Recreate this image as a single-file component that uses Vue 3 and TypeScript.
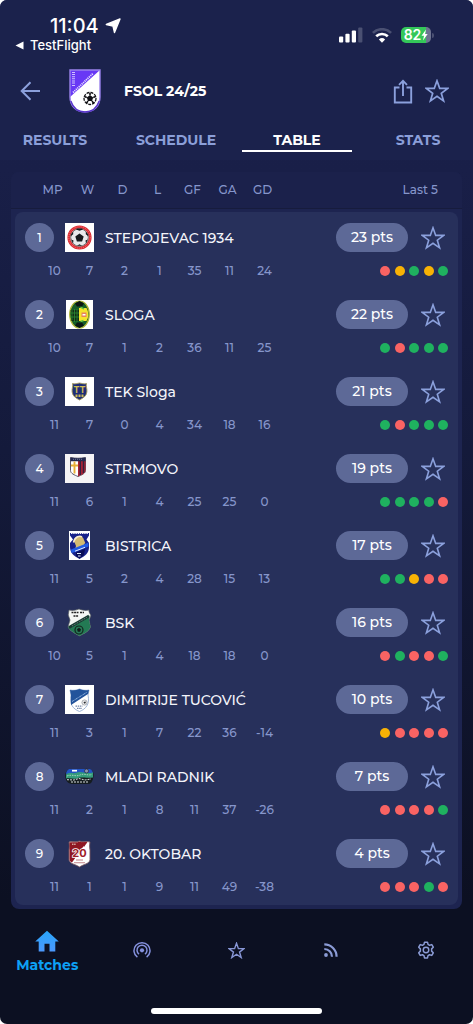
<script setup lang="ts">
import { ref } from 'vue'

type Result = 'w' | 'd' | 'l'

interface Team {
  name: string
  crest: string
  stats: number[]
  points: number
  form: Result[]
}

const form = (s: string): Result[] => s.split('') as Result[]

const teams: Team[] = [
  { name: 'STEPOJEVAC 1934', crest: 'ball', stats: [10, 7, 2, 1, 35, 11, 24], points: 23, form: form('ldwdw') },
  { name: 'SLOGA', crest: 'sloga', stats: [10, 7, 1, 2, 36, 11, 25], points: 22, form: form('wlwww') },
  { name: 'TEK Sloga', crest: 'tek', stats: [11, 7, 0, 4, 34, 18, 16], points: 21, form: form('wlwww') },
  { name: 'STRMOVO', crest: 'strmovo', stats: [11, 6, 1, 4, 25, 25, 0], points: 19, form: form('wwwwl') },
  { name: 'BISTRICA', crest: 'bistrica', stats: [11, 5, 2, 4, 28, 15, 13], points: 17, form: form('wwdll') },
  { name: 'BSK', crest: 'bsk', stats: [10, 5, 1, 4, 18, 18, 0], points: 16, form: form('lwllw') },
  { name: 'DIMITRIJE TUCOVIĆ', crest: 'tucovic', stats: [11, 3, 1, 7, 22, 36, -14], points: 10, form: form('dllll') },
  { name: 'MLADI RADNIK', crest: 'mladi', stats: [11, 2, 1, 8, 11, 37, -26], points: 7, form: form('llllw') },
  { name: '20. OKTOBAR', crest: 'oktobar', stats: [11, 1, 1, 9, 11, 49, -38], points: 4, form: form('lllwl') },
]

const columns = ['MP', 'W', 'D', 'L', 'GF', 'GA', 'GD']
const tabs = ['RESULTS', 'SCHEDULE', 'TABLE', 'STATS']
const activeTab = ref('TABLE')
const favourites = ref<string[]>([])
const starPath = 'M12 1.8 14.7 9.4H22.7L16.3 14.2 18.6 21.9 12 17.3 5.4 21.9 7.7 14.2 1.3 9.4H9.3Z'
const formLabel: Record<Result, string> = { w: 'win', d: 'draw', l: 'loss' }

function toggle(name: string) {
  favourites.value = favourites.value.includes(name)
    ? favourites.value.filter((n) => n !== name)
    : [...favourites.value, name]
}
</script>

<template>
  <div class="frame">
    <div class="screen">
      <header class="top">
        <div class="status">
          <div class="clock">
            <div class="time">
              <span>11:04</span>
              <svg width="16" height="16" viewBox="0 0 16 16" aria-hidden="true"><path d="M15 1 9.500 14.500 8 8 1.300 6.500Z" fill="#fff" stroke="#fff" stroke-width="1.400" stroke-linejoin="round" /></svg>
            </div>
            <a class="back-app" href="#testflight">
              <svg width="9" height="9" viewBox="0 0 9 9" aria-hidden="true"><path d="M8.5.5v8L.5 4.5Z" fill="#fff" /></svg>
              <span>TestFlight</span>
            </a>
          </div>
          <div class="indicators">
            <svg width="24" height="16" viewBox="0 0 24 16" aria-label="Signal">
              <g fill="#fff"><rect x="0" y="9.5" width="4.2" height="6" rx="1" /><rect x="6.4" y="6.7" width="4.2" height="8.8" rx="1" /><rect x="12.8" y="3.6" width="4.2" height="11.9" rx="1" /></g>
              <rect x="19.2" y=".5" width="4.2" height="15" rx="1" fill="#4a5072" />
            </svg>
            <svg width="20" height="15" viewBox="0 0 20 15" aria-label="Wi-Fi">
              <path d="M.9 4.9a13 13 0 0 1 18.2 0" fill="none" stroke="#4a5072" stroke-width="2.6" />
              <path d="M4.2 8.3a8.3 8.3 0 0 1 11.6 0" fill="none" stroke="#fff" stroke-width="2.6" />
              <path d="M6.9 11.4a4.6 4.6 0 0 1 6.2 0L10 14.7Z" fill="#fff" />
            </svg>
            <span class="battery">
              <span class="cell"><span>82</span><svg width="7" height="12" viewBox="0 0 7 12" aria-hidden="true"><path d="M5 .5.5 6.8H3L2 11.5 6.7 5H4.1Z" fill="#fff" /></svg></span>
              <span class="nub"></span>
            </span>
          </div>
        </div>

        <div class="titlebar">
          <button class="icon back" type="button" aria-label="Back">
            <svg width="20" height="20" viewBox="0 0 20 20"><path d="M20 10H2M10.500 1.200 1.700 10l8.800 8.800" fill="none" stroke="#8ba0dc" stroke-width="2" /></svg>
          </button>
          <svg class="league" width="32" height="44" viewBox="0 0 32 44" aria-hidden="true">
            <path d="M1 1H31V28C31 37 25 43 16 43S1 37 1 28Z" fill="#fff" />
            <path d="M1 1H31L1 28Z" fill="#6838f5" />
            <path d="M1 1H31V28C31 37 25 43 16 43S1 37 1 28Z" fill="none" stroke="#9a82ec" stroke-width="1.4" />
            <path d="M1.800 32C4 38.500 9 43 16 43s12-4.500 14.200-11" fill="none" stroke="#5936c9" stroke-width="1.400" />
            <g fill="none" stroke="#e4dcff">
              <path d="M4.500 3v15" stroke-width="3" stroke-dasharray="1 1 1 1.300" opacity=".85" />
              <path d="M4 23.500 24 4.500" stroke-width="1.800" stroke-dasharray="1.200 .8" />
            </g>
            <circle cx="21" cy="29.500" r="6" fill="#fff" stroke="#151519" stroke-width="1.300" stroke-dasharray="3 1" />
            <path d="m21 26 3.200 2.400-1.200 3.700h-4l-1.200-3.700Z" fill="#101014" />
            <path d="m21 26v-2M24.200 28.400l2.400-.8M23 32.100l1.800 2.300M19 32.100l-1.800 2.300M17.800 28.400l-2.400-.8" stroke="#101014" stroke-width="1.600" />
          </svg>
          <h1>FSOL 24/25</h1>
          <button class="icon" type="button" aria-label="Share">
            <svg width="20" height="25" viewBox="0 0 20 25"><path d="M6.500 8.500H1.800V23.500H18.200V8.500H13.500M10 17V2.500M6 5.800 10 1.800l4 4" fill="none" stroke="#8ba0dc" stroke-width="1.900" /></svg>
          </button>
          <button class="icon" type="button" aria-label="Favourite league" :aria-pressed="favourites.includes('FSOL')" @click="toggle('FSOL')">
            <svg width="24" height="24" viewBox="0 0 24 24"><path :d="starPath" :fill="favourites.includes('FSOL') ? '#8ba0dc' : 'none'" stroke="#8ba0dc" stroke-width="1.700" /></svg>
          </button>
        </div>

        <nav class="tabs" aria-label="Competition">
          <button v-for="t in tabs" :key="t" type="button" :class="{ active: t === activeTab }" @click="activeTab = t">{{ t }}</button>
        </nav>
      </header>

      <main>
        <table>
          <thead>
            <tr class="line">
              <th v-for="c in columns" :key="c" scope="col">{{ c }}</th>
              <th class="last" scope="col">Last 5</th>
            </tr>
          </thead>
          <tbody>
            <template v-for="(team, i) in teams" :key="team.name">
              <tr class="team">
                <td class="rank"><span>{{ i + 1 }}</span></td>
                <td class="crest">
                  <svg width="29" height="29" viewBox="0 0 29 29" aria-hidden="true">
                    <g v-if="team.crest === 'ball'">
                      <path d="M0 0h29v29H0Z" fill="#fff" />
                      <circle cx="14.500" cy="14.500" r="10.700" fill="#fff" stroke="#dc2930" stroke-width="2.800" />
                      <circle cx="14.500" cy="14.500" r="10.700" fill="none" stroke="#f5a5a8" stroke-width=".7" stroke-dasharray="1 1" />
                      <circle cx="14.500" cy="14.500" r="8.800" fill="#e9e9eb" stroke="#333" stroke-width=".7" />
                      <path d="m14.500 10.500 4.200 3-1.600 4.900h-5.200l-1.600-4.900ZM11 6.500l3.500 1.200L18 6.500l-1-1h-5ZM6 13l2.200-1.800V8.500L5.500 12ZM23 13l-2.200-1.800V8.500l2.700 3.500ZM8 20.500l.5-3-2.200-1ZM21 20.500l-.5-3 2.200-1ZM12 22.800l2.500-1.500 2.500 1.500Z" fill="#17191d" />
                    </g>
                    <g v-else-if="team.crest === 'sloga'">
                      <path d="M1 0h27v29H1Z" fill="#fff" />
                      <ellipse cx="14.500" cy="14.500" rx="9.800" ry="13.500" fill="#155c27" stroke="#b1b536" stroke-width="1.200" />
                      <path d="M10 3.500 14.500 1l4.500 2.500-2 3h-5ZM10 25.500l4.500 2.500 4.500-2.500-2-3h-5Z" fill="#0b1512" />
                      <path d="M14 8h7.500a13 13 0 0 1 0 13H14Z" fill="#f5e52c" />
                      <path d="M5.500 10H14v11H6.500Z" fill="#122d16" />
                      <path d="M7 10v10M9.500 9v13M12 9v13M5 13h9M5 17h9" stroke="#2c8c34" stroke-width=".8" />
                      <path d="M16.500 12.500h5v4.500h-5Z" fill="#e6845d" />
                      <path d="M17.500 14h3v1.500h-3Z" fill="#fff" />
                      <path d="M15.500 7.200 19 9M15.500 21.500l3-1" stroke="#68c242" stroke-width="1.500" />
                    </g>
                    <g v-else-if="team.crest === 'tek'">
                      <path d="M0 0h29v29H0Z" fill="#fff" />
                      <path d="M7.500 6.500c2.500 1 5-.3 7-.5 2 .2 4.500 1.500 7 .5-.8 3 .8 4.800.4 8.500-.5 4.500-4 6-7.400 8-3.400-2-6.900-3.500-7.400-8-.4-3.700 1.200-5.500.4-8.500Z" fill="#1e2e76" stroke="#a89c5b" stroke-width=".9" />
                      <text class="mark" x="14.500" y="16" font-size="9" fill="#d0bd55">TT</text>
                      <path d="M10.500 18.700h8" stroke="#d0bd55" stroke-width="2.600" stroke-dasharray="2 1" />
                    </g>
                    <g v-else-if="team.crest === 'strmovo'">
                      <path d="M0 0h29v29H0Z" fill="#f5f4f6" />
                      <path d="M5.500 3.500c5 1 10 1 15 0v13c0 3-4 4.500-7.500 6-3.500-1.500-7.500-3-7.500-6Z" fill="#fff" stroke="#5b5768" />
                      <path d="M13 7h7.500v9.500c0 3-4 4.500-7.500 6Z" fill="#a62135" />
                      <path d="M15.300 7v14M18.500 7v12" stroke="#33203d" stroke-width="1.400" />
                      <path d="M5.500 3.500c5 1 10 1 15 0v3.700h-15Z" fill="#24294e" />
                      <path d="M9.500 7.500v12M6 11.500h7" stroke="#e8af37" stroke-width="1.900" />
                      <path d="M8 5.300h10" stroke="#848aad" stroke-width=".8" stroke-dasharray="1 1" />
                    </g>
                    <g v-else-if="team.crest === 'bistrica'">
                      <path d="M4 0h21v29H4Z" fill="#fff" />
                      <path d="M5 2h19v14c0 6-4 9-9.500 12C9 25 5 22 5 16Z" fill="#17218a" />
                      <path d="M5 4.500 8 8.500 5 12ZM24 4.500 21.500 8.500 24 12Z" fill="#fff" />
                      <path d="M6 2.500h17" stroke="#f3f3fa" stroke-width="1" stroke-dasharray="1.500 .7" />
                      <path d="M9 10c0-6 9-7 10-1l1.300 3-1.300 1.300.2 2-3 .5V17L10 18.500l1-3.500Z" fill="#d4bb72" />
                      <path d="M8.500 11.500C10 5 15 4.500 17 6" fill="none" stroke="#f6ead0" stroke-width="1.500" />
                      <path d="M6 18.500 20 13l3.500-1.500v4L10 21l-3.500 1Z" fill="#235ce5" />
                      <path d="M11 21.500 20 18l-1 6-4.500 3.500L11 25Z" fill="#090d58" />
                      <path d="M10 20.200 20 16.300M12 22.500h4M13 25h2.500" stroke="#e3edff" />
                    </g>
                    <g v-else-if="team.crest === 'bsk'">
                      <path d="M4 2c3 .8 6.500.5 10-1C18 2.500 21 2.800 24 2c-.5 3 2 4 1.800 6L24 12l1.500 7c-2 5-6 6-11 9-5-3-9-4.500-11.500-9L5 12 3.200 7Z" fill="#f4f7f4" stroke="#555a60" stroke-width=".7" />
                      <path d="M24.500 7.500 24 12l1.500 7c-2 5-6 6-11 9-5-3-9-4.500-11.500-9Z" fill="#237a54" />
                      <path d="M4 19.500 24 8" stroke="#183b33" stroke-width="2.800" />
                      <path d="M7 18 22 9.300" stroke="#748d84" stroke-width="1" stroke-dasharray="1 1" />
                      <path d="M6.500 4.500h7M15 4.500h4M8.500 8h5" stroke="#222" stroke-width="1.700" stroke-dasharray="2 .6" />
                      <circle cx="14" cy="22" r="4" fill="#287a57" stroke="#13251e" stroke-width="1.200" />
                      <path d="m14 19.800 2 1.500-.8 2.500h-2.400l-.8-2.500Z" fill="#111b19" />
                    </g>
                    <g v-else-if="team.crest === 'tucovic'">
                      <path d="M0 0h29v29H0Z" fill="#fff" />
                      <path d="M5 5c3.500.7 6.500.3 9.500-1 3 1.300 6 1.700 9.500 1l-1 5c2 9-2 14-8.500 16.500C8 24 4 19 6 10Z" fill="#fff" stroke="#94abd0" stroke-width=".9" />
                      <path d="M5 5c3.500.7 6.500.3 9.500-1 3 1.300 6 1.700 9.500 1l-1 4L6 20V10Z" fill="#22539b" />
                      <path d="M7 16.500 21.500 7.500" stroke="#a7c7ed" stroke-dasharray="1 .6" />
                      <circle cx="19.500" cy="17.500" r="2.600" fill="#eee" stroke="#8c9099" stroke-width=".7" />
                      <path d="m18.500 17 2-.5.3 1.500-1.500.7Z" fill="#282b30" />
                      <path d="M10.500 21.200h7M12 23.300h5" stroke="#7084aa" stroke-width="1.300" stroke-dasharray="1.500 .7" />
                    </g>
                    <g v-else-if="team.crest === 'mladi'">
                      <path d="M4 7h21c3.500 2 4.500 5 3 10-1 3-2 5-5 5H7c-4-.5-6-3-6.500-6C-.5 12 1 9 4 7Z" fill="#151c20" />
                      <path d="M4 7h21c2 1 3 2.500 3 5H1c0-2 1-4 3-5Z" fill="#2354c4" />
                      <path d="M1 12.500c4-3 7 0 11-2s8 2 16 0v5c-8 1-12-1-16 1-4 1-7-1-11 0Z" fill="#349c7b" />
                      <path d="M2 14c5-2 9 1 13-1s8 1 12-.5" fill="none" stroke="#a3d0bd" stroke-dasharray="1.500 1" />
                      <path d="M7 8.700h5" stroke="#fff" stroke-width="1.700" />
                      <circle cx="21.500" cy="9" r="2" fill="#8c94b1" stroke="#222" stroke-width=".6" />
                      <path d="M2 17.700 9 18l5-1.500 6 1.500 6-1M6 20h17" stroke="#d8dedd" fill="none" stroke-dasharray="2 1" />
                    </g>
                    <g v-else>
                      <path d="M4 3c4-1.500 7 1 10.500-1C18 4 21 1.500 25 3c-.5 3-.5 5 0 8v10c-1 4-6 4-10.500 7C10 25 5 25 4 21V11C4.500 8 4.500 6 4 3Z" fill="#fff" stroke="#77535f" stroke-width=".9" />
                      <path d="M4.500 3.500c4-1 7 .7 10-1 2 1 4.500 1.300 7 .5L7 23.500C5 22.500 4.500 21.500 4.500 20V11Z" fill="#8e1722" />
                      <path d="M16 3.300 22.500 3 19 8Z" fill="#8e1722" />
                      <text class="mark" x="14.500" y="18" font-size="11" fill="#9d2029" stroke="#fff" stroke-width="1.600" paint-order="stroke">20</text>
                      <path d="M7 5.200h4" stroke="#eed" stroke-dasharray="1.200 .5" />
                      <path d="M11 21h7M9 23.700h11" stroke="#c18286" stroke-width="1.100" />
                    </g>
                  </svg>
                </td>
                <th class="name" scope="rowgroup">{{ team.name }}</th>
                <td class="points"><span>{{ team.points }} pts</span></td>
                <td class="star">
                  <button class="icon" type="button" :aria-label="'Favourite ' + team.name" :aria-pressed="favourites.includes(team.name)" @click="toggle(team.name)">
                    <svg width="24" height="24" viewBox="0 0 24 24"><path :d="starPath" :fill="favourites.includes(team.name) ? '#8ba0dc' : 'none'" stroke="#8ba0dc" stroke-width="1.600" /></svg>
                  </button>
                </td>
              </tr>
              <tr class="line">
                <td v-for="(s, k) in team.stats" :key="k">{{ s }}</td>
                <td class="form"><span v-for="(r, k) in team.form" :key="k" class="dot" :class="r" role="img" :aria-label="formLabel[r]"></span></td>
              </tr>
            </template>
          </tbody>
        </table>
      </main>

      <footer>
        <nav class="bottom" aria-label="Main">
          <a class="current" href="#matches">
            <svg width="24" height="22" viewBox="0 0 24 22" aria-hidden="true">
              <defs><linearGradient id="home" x2="0" y2="1"><stop stop-color="#28a5fa" /><stop offset="1" stop-color="#4c98fc" /></linearGradient></defs>
              <path d="M12 .8 23.800 11.500H20.300V21.500H14.500V13.800H9.500V21.500H3.700V11.500H.2Z" fill="url(#home)" />
            </svg>
            <span>Matches</span>
          </a>
          <a href="#live" aria-label="Live">
            <svg width="18" height="18" viewBox="0 0 18 18"><g fill="none" stroke="#8490dc" stroke-width="1.500"><path d="M4.400 16.200a8 8 0 1 1 9.200 0" /><path d="M6 13.200a5 5 0 1 1 6 0" /></g><circle cx="9" cy="9.300" r="2.100" fill="#8490dc" /></svg>
          </a>
          <a href="#favourites" aria-label="Favourites">
            <svg width="17" height="17" viewBox="0 0 24 24"><path :d="starPath" fill="none" stroke="#8795d4" stroke-width="2" /></svg>
          </a>
          <a href="#news" aria-label="News">
            <svg width="14" height="14" viewBox="0 0 14 14"><g fill="none" stroke="#8b9bd5" stroke-width="2.200"><path d="M.3 1.400A12.300 12.300 0 0 1 12.600 13.700" /><path d="M.3 6A7.700 7.700 0 0 1 8 13.700" /></g><circle cx="2" cy="12" r="1.900" fill="#8b9bd5" /></svg>
          </a>
          <a href="#settings" aria-label="Settings">
            <svg width="18" height="18" viewBox="0 0 24 24"><path d="M10 1.500h4l.7 3 2 1.200 3-.9 2 3.500-2.200 2.200v3l2.200 2.200-2 3.500-3-.9-2 1.200-.7 3h-4l-.7-3-2-1.200-3 .9-2-3.500L4.500 13.500v-3L2.300 8.300l2-3.500 3 .9 2-1.200Z" fill="none" stroke="#8b9bd5" stroke-width="2" stroke-linejoin="round" /><circle cx="12" cy="12" r="3.700" fill="none" stroke="#8b9bd5" stroke-width="1.900" /></svg>
          </a>
        </nav>
        <div class="home-bar"></div>
      </footer>
    </div>
  </div>
</template>

<style>
body {
  margin: 0;
  background: #fff;
}
</style>

<style scoped>
.frame {
  background: #fff;
  font-family: Montserrat, Inter, "Open Sans", sans-serif;
  color: #fff;
}
.screen {
  box-sizing: border-box;
  min-height: 100vh;
  display: flex;
  flex-direction: column;
  border-radius: 7px;
  overflow: hidden;
  background: linear-gradient(#1b224d 0, #191f48 170px, #141a3b 450px, #0c1022 900px);
}
.top {
  background: #1b224c;
  height: 160px;
}
.status {
  display: flex;
  justify-content: space-between;
  height: 66px;
  box-sizing: border-box;
  padding: 14px 39px 0 15px;
  font-family: Inter, sans-serif;
}
.time {
  display: flex;
  align-items: center;
  gap: 6px;
  padding-left: 35px;
  font-size: 20px;
  line-height: 24px;
  font-weight: 500;
}
.back-app {
  display: flex;
  align-items: center;
  gap: 6px;
  font-size: 13px;
  line-height: 14px;
  font-weight: 500;
  color: #fff;
  text-decoration: none;
}
.indicators {
  display: flex;
  align-items: center;
  gap: 9px;
  height: 42px;
}
.battery {
  display: flex;
  align-items: center;
  gap: 1px;
}
.cell {
  display: flex;
  align-items: center;
  justify-content: center;
  width: 30px;
  height: 16px;
  border-radius: 5px;
  background: linear-gradient(90deg, #34c759 82%, #6d7390 82%);
  font-size: 14px;
  line-height: 16px;
  font-weight: 600;
}
.nub {
  width: 2px;
  height: 5px;
  border-radius: 0 2px 2px 0;
  background: #4a5072;
}
.icon {
  display: flex;
  padding: 0;
  border: 0;
  background: none;
  cursor: pointer;
}
.titlebar {
  display: flex;
  align-items: center;
  height: 50px;
  padding: 0 24px 0 20px;
}
.league {
  margin-left: 29px;
}
h1 {
  flex: 1;
  margin: 0 0 0 23px;
  font-size: 14px;
  line-height: 20px;
  font-weight: 700;
}
.titlebar .icon + .icon {
  margin-left: 12px;
}
.tabs {
  display: grid;
  grid-template-columns: repeat(4, 1fr);
  column-gap: 11px;
  padding-top: 12px;
}
.tabs button {
  height: 24px;
  padding: 2px 0 0;
  border: 0;
  border-bottom: 2px solid transparent;
  background: none;
  font: 700 14px/20px Montserrat, Inter, sans-serif;
  color: #8b9fd9;
  cursor: pointer;
}
.tabs .active {
  color: #fff;
  border-color: #fff;
}
main {
  padding: 12px 11px 0;
}
table {
  display: block;
  padding-bottom: 4px;
  border-radius: 8px;
  background: #1d2450;
}
thead,
tbody {
  display: block;
}
thead {
  padding: 0 6px 0 2px;
  border-bottom: 1px solid #171c3d;
  border-radius: 8px 8px 0 0;
  background: #1b214b;
}
tbody {
  margin: 3px 4px 0;
  border-radius: 8px;
  background: #27305b;
}
.line {
  display: grid;
  grid-template-columns: repeat(7, 35px) 1fr;
  align-items: center;
  height: 37px;
  padding: 0 10px 0 22px;
  font-size: 12px;
  line-height: 16px;
  color: #8696cb;
}
thead .line {
  height: 36px;
}
th,
td {
  padding: 0;
  font-weight: 500;
  text-align: center;
}
.last {
  padding-right: 8px;
  text-align: right;
}
.team {
  display: flex;
  align-items: center;
  height: 29px;
  padding: 11px 13px 0 10px;
}
.rank span {
  display: block;
  width: 29px;
  border-radius: 50%;
  background: #5d6997;
  font-size: 12px;
  line-height: 29px;
}
.crest {
  height: 29px;
  margin: 0 11px;
}
.crest svg {
  display: block;
}
.mark {
  font-family: Inter, sans-serif;
  font-weight: 700;
  text-anchor: middle;
}
.name {
  flex: 1;
  text-align: left;
  font-size: 14px;
  line-height: 20px;
  color: #f3f4fa;
}
.points span {
  display: block;
  width: 72px;
  border-radius: 15px;
  background: #5d6997;
  font-size: 14px;
  line-height: 29px;
}
.star {
  margin-left: 13px;
}
.form {
  display: flex;
  justify-content: space-between;
  justify-self: end;
  width: 68px;
}
.dot {
  width: 10px;
  height: 10px;
  border-radius: 50%;
}
.w {
  background: #1fb15f;
}
.d {
  background: #f8b205;
}
.l {
  background: #f96363;
}
footer {
  display: flex;
  flex: 1;
  flex-direction: column;
  justify-content: space-between;
  align-items: center;
  padding: 15px 0 10px;
}
.bottom {
  display: grid;
  grid-template-columns: repeat(5, 1fr);
  width: 100%;
  height: 52px;
}
.bottom a {
  display: flex;
  flex-direction: column;
  align-items: center;
  justify-content: center;
  gap: 4px;
  text-decoration: none;
}
.bottom .current {
  padding-top: 4px;
  font-size: 14px;
  line-height: 18px;
  font-weight: 700;
  color: #0da0f5;
}
.home-bar {
  width: 36%;
  height: 6px;
  border-radius: 3px;
  background: #fff;
}
</style>
